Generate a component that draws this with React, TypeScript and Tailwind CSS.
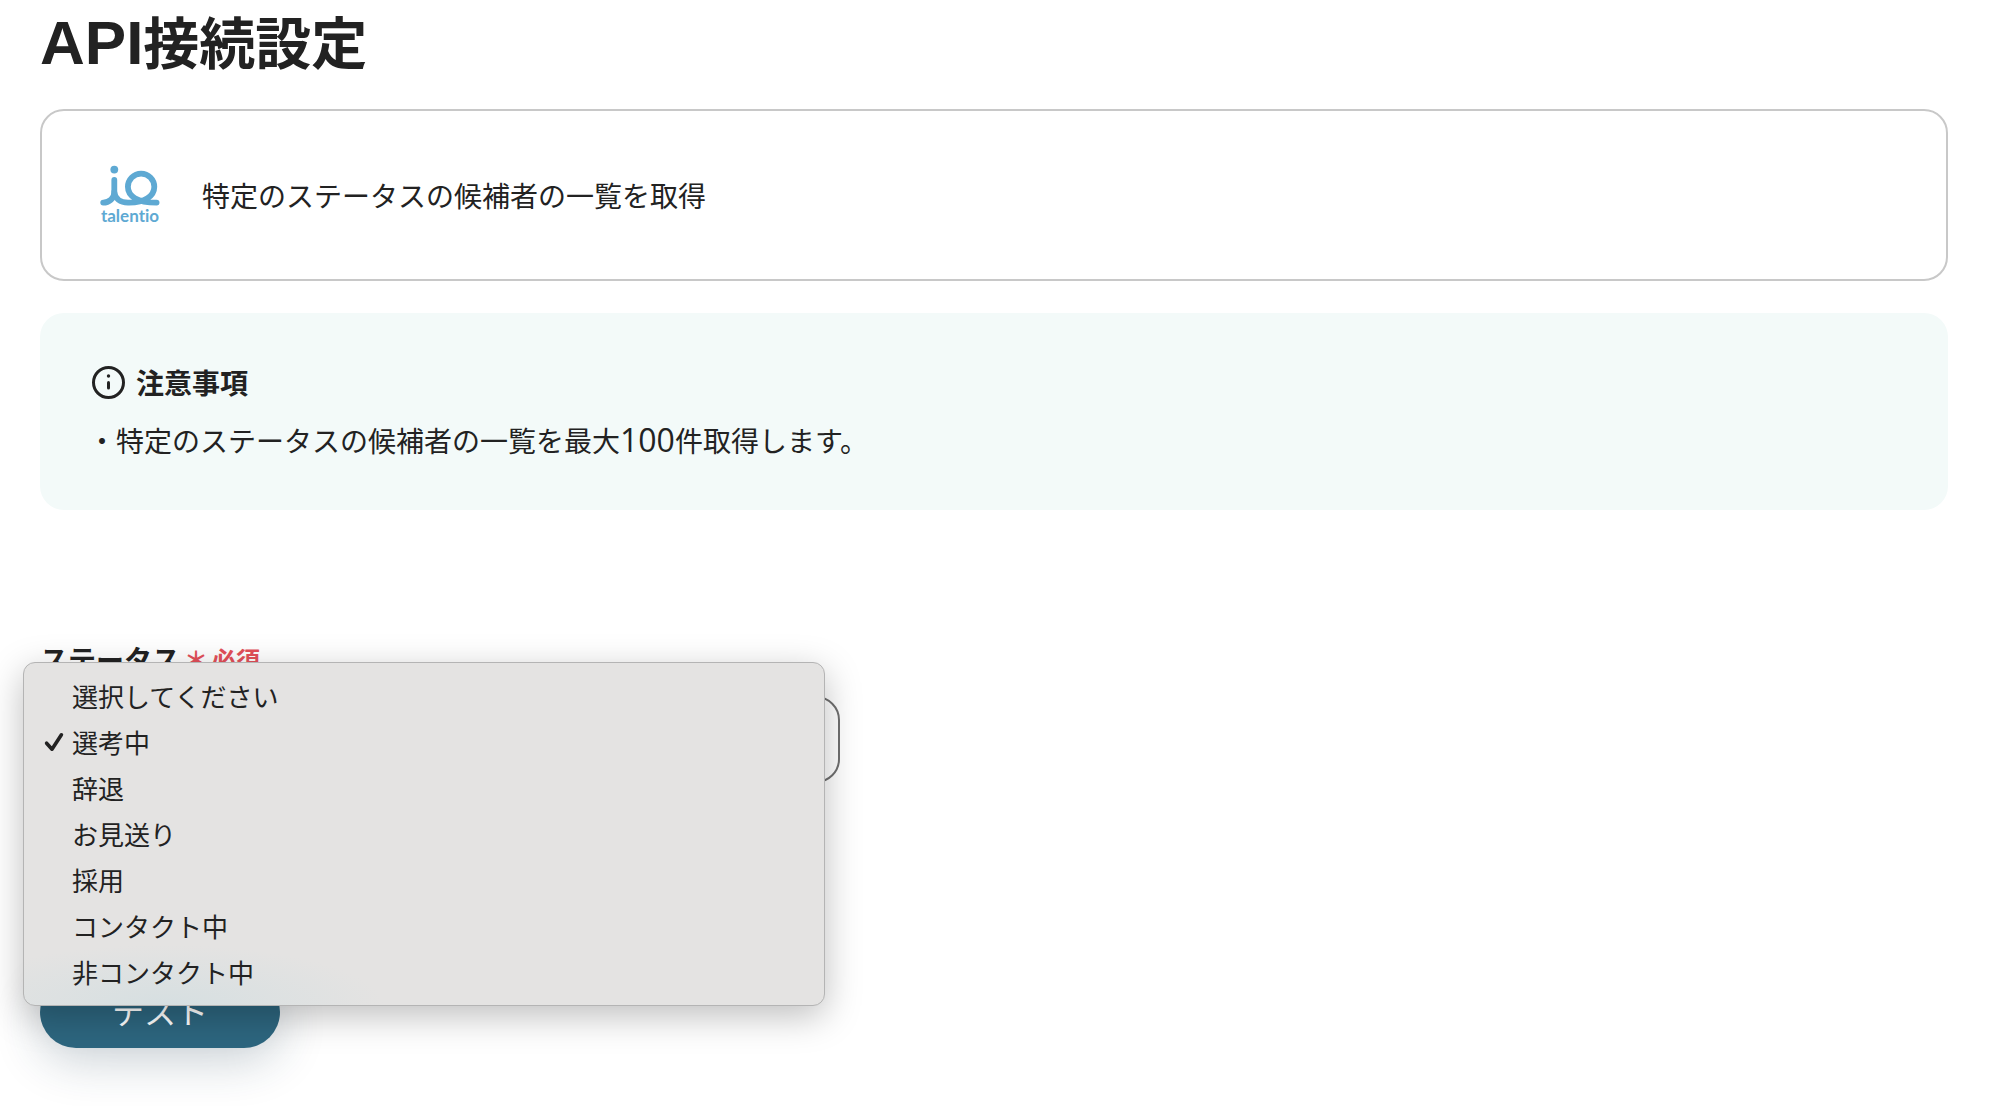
import { useState } from "react";

const statuses = [
  "選択してください",
  "選考中",
  "辞退",
  "お見送り",
  "採用",
  "コンタクト中",
  "非コンタクト中",
];

function TalentioLogo() {
  return (
    <svg
      role="img"
      aria-label="talentio"
      viewBox="0 0 64 62"
      className="h-[62px] w-16 shrink-0"
      fill="none"
      stroke="#5ea9d3"
      strokeWidth="5.8"
      strokeLinecap="round"
      strokeLinejoin="round"
    >
      <circle cx="16.3" cy="5.6" r="3.9" fill="#5ea9d3" stroke="none" />
      <path d="M16.3 16V28C16.3 34.5 11 38.6 5.2 38.6" />
      <path d="M16.3 28C17 34.5 22 38.4 30 38.6C47 38.9 56.3 32 56.3 22.8A13.2 13.2 0 1 0 29.9 22.8C29.9 32 39 38.6 58.6 38.6" />
      <text
        x="32"
        y="58"
        textAnchor="middle"
        fill="#5ea9d3"
        stroke="none"
        className="font-['Lato',sans-serif] text-[17px] font-bold [font-variant-ligatures:none]"
      >
        talentio
      </text>
    </svg>
  );
}

function InfoIcon() {
  return (
    <svg
      aria-hidden="true"
      viewBox="0 0 40 40"
      className="size-10 shrink-0"
      fill="none"
      stroke="currentColor"
      strokeWidth="3"
      strokeLinecap="round"
    >
      <circle cx="20.5" cy="20.5" r="15" />
      <path d="M20.5 20.5V26" />
      <circle cx="20.5" cy="14" r="1.7" fill="currentColor" stroke="none" />
    </svg>
  );
}

function CheckMark() {
  return (
    <svg
      aria-hidden="true"
      viewBox="0 0 20 20"
      className="size-5"
      fill="none"
      stroke="currentColor"
      strokeWidth="3.6"
      strokeLinecap="round"
      strokeLinejoin="round"
    >
      <path d="M2.6 11.2L8 17.2L17.4 2.8" />
    </svg>
  );
}

export default function App() {
  const [status, setStatus] = useState("選考中");

  return (
    <main className="min-h-screen bg-white pr-[46px] pb-14 pl-10 font-['Noto_Sans_CJK_JP',sans-serif] text-[28px] leading-10 text-[#222]">
      <h1 className="flex h-[109px] items-baseline text-[56px] leading-[80px] font-bold">
        <span className="font-['Liberation_Sans',sans-serif] text-[62px]">API</span>
        接続設定
      </h1>

      <section className="flex items-center gap-10 rounded-3xl border-2 border-[#c8c8c8] px-14 py-[53px]">
        <TalentioLogo />
        <p>特定のステータスの候補者の一覧を取得</p>
      </section>

      <section className="mt-8 rounded-3xl bg-[#f3faf9] px-12 pt-[49px] pb-12">
        <h2 className="flex items-center gap-2 font-bold">
          <InfoIcon />
          注意事項
        </h2>
        <p className="mt-4 leading-[44px]">
          ・特定のステータスの候補者の一覧を最大
          <span className="font-['Open_Sans',sans-serif] text-[32px] leading-none">100</span>
          件取得します。
        </p>
      </section>

      <form className="mt-[129px]" onSubmit={(e) => e.preventDefault()}>
        <label htmlFor="status" className="flex items-center font-bold">
          ステータス
          <span className="ml-1 text-2xl leading-10 text-[#e4505a]">
            ＊<span className="ml-1">必須</span>
          </span>
        </label>

        <div className="relative mt-[17px] w-full max-w-[800px]">
          <select
            id="status"
            value={status}
            onChange={(e) => setStatus(e.target.value)}
            className="h-[87px] w-full appearance-none rounded-3xl border-2 border-[#707070] bg-white px-8"
          >
            {statuses.map((s) => (
              <option key={s}>{s}</option>
            ))}
          </select>

          <ul
            role="listbox"
            aria-label="ステータス"
            className="absolute -top-[34px] right-[15px] -left-[17px] z-10 rounded-xl border border-[#b4b4b4] bg-[#e4e3e2] bg-[radial-gradient(220px_60px_at_140px_100%,#d6dfe1,#e4e3e200)] py-[10px] text-[26px] leading-[46px] shadow-[0_10px_36px_rgba(0,0,0,0.26)]"
          >
            {statuses.map((s) => (
              <li
                key={s}
                role="option"
                aria-selected={s === status}
                onClick={() => setStatus(s)}
                className="grid grid-cols-[28px_1fr] items-center pl-5"
              >
                <span>{s === status && <CheckMark />}</span>
                <span>{s}</span>
              </li>
            ))}
          </ul>
        </div>

        <button
          type="submit"
          className="mt-[193px] h-[72px] w-60 rounded-full bg-[#2d667f] pb-1 text-[32px] leading-10 text-white shadow-[0_12px_48px_rgba(30,60,80,0.24)]"
        >
          テスト
        </button>
      </form>
    </main>
  );
}
